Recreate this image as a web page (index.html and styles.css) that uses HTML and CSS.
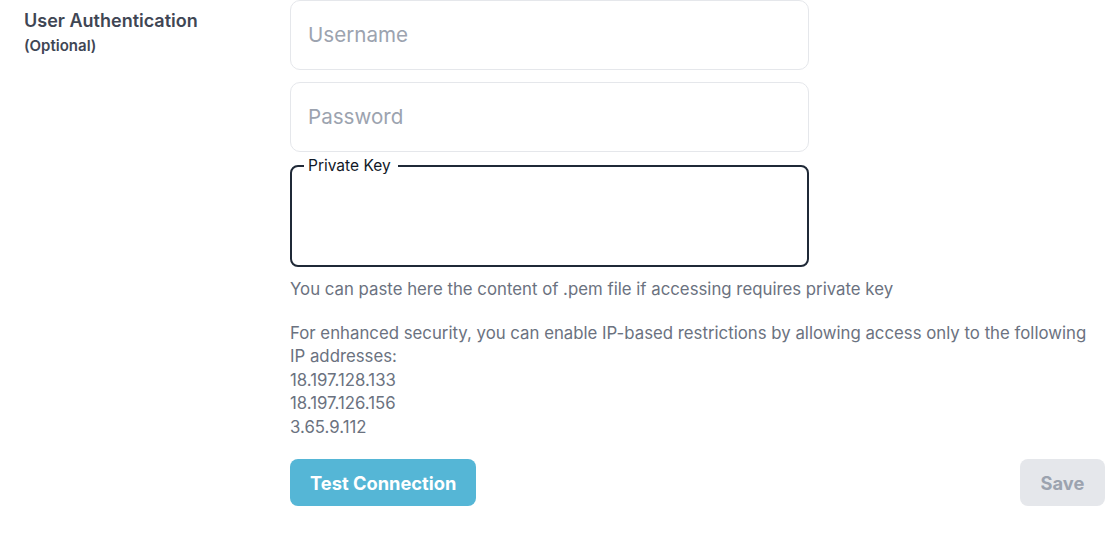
FILE: index.html
```html
<!DOCTYPE html>
<html lang="en">
<head>
  <meta charset="UTF-8" />
  <meta name="viewport" content="width=device-width, initial-scale=1.0" />
  <title>User Authentication</title>
  <link rel="stylesheet" href="styles.css">
</head>
<body>
  <div class="section">
    <div class="section-label">
      <h3>User Authentication</h3>
      <span>(Optional)</span>
    </div>
    <div class="section-body">
      <input class="field" type="text" placeholder="Username" />
      <input class="field" type="password" placeholder="Password" />
      <fieldset class="key-box">
        <legend>Private Key</legend>
        <textarea></textarea>
      </fieldset>
      <p class="hint">You can paste here the content of .pem file if accessing requires private key</p>
      <p class="hint ip-list">For enhanced security, you can enable IP-based restrictions by allowing access only to the following IP addresses:<br>18.197.128.133<br>18.197.126.156<br>3.65.9.112</p>
      <div class="actions">
        <button class="btn btn-test">Test Connection</button>
        <button class="btn btn-save" disabled>Save</button>
      </div>
    </div>
  </div>
</body>
</html>
```

FILE: styles.css
```css
body {
  margin: 0;
  font-family: Inter, 'Noto Sans', sans-serif;
  background: #fff;
  color: #374151;
}
.section {
  display: flex;
  padding: 0 15px 0 24px;
}
.section-label {
  width: 266px;
  flex-shrink: 0;
  padding-top: 10px;
}
.section-label h3 {
  margin: 0;
  font-size: 18px;
  font-weight: 600;
  line-height: 22px;
  color: #3f4654;
}
.section-label span {
  display: block;
  margin-top: 4px;
  font-size: 15px;
  font-weight: 600;
  color: #3f4654;
}
.section-body {
  flex: 1;
  display: flex;
  flex-direction: column;
}
.field {
  width: 519px;
  height: 70px;
  box-sizing: border-box;
  border: 1px solid #e5e7eb;
  border-radius: 10px;
  padding: 0 17px 2px;
  font-family: inherit;
  font-size: 20.6px;
  color: #111827;
  margin-bottom: 12px;
  outline: none;
}
.field::placeholder {
  color: #9ca3af;
}
.key-box {
  width: 519px;
  box-sizing: border-box;
  margin: 0;
  margin-top: -7px;
  padding: 0 8px;
  height: 110px;
  border: 2px solid #1f2937;
  border-radius: 8px;
}
.key-box legend {
  font-size: 15.5px;
  color: #111827;
  padding: 0 7px 0 4px;
  margin-left: 4px;
  line-height: 17px;
}
.key-box textarea {
  width: 100%;
  height: 84px;
  border: none;
  resize: none;
  outline: none;
  font-family: inherit;
}
.hint {
  margin: 11px 0 0;
  font-size: 16.8px;
  line-height: 23.5px;
  color: #6b7280;
}
.ip-list {
  margin-top: 20px;
}
.actions {
  display: flex;
  justify-content: space-between;
  margin-top: 20px;
}
.btn {
  height: 47px;
  border: none;
  border-radius: 8px;
  font-family: inherit;
  font-size: 18.3px;
  font-weight: 700;
  padding: 0 20px;
}
.btn-test {
  background: #55b6d6;
  color: #fff;
}
.btn-save {
  width: 85px;
  background: #e5e7eb;
  color: #9ca3af;
}
```
